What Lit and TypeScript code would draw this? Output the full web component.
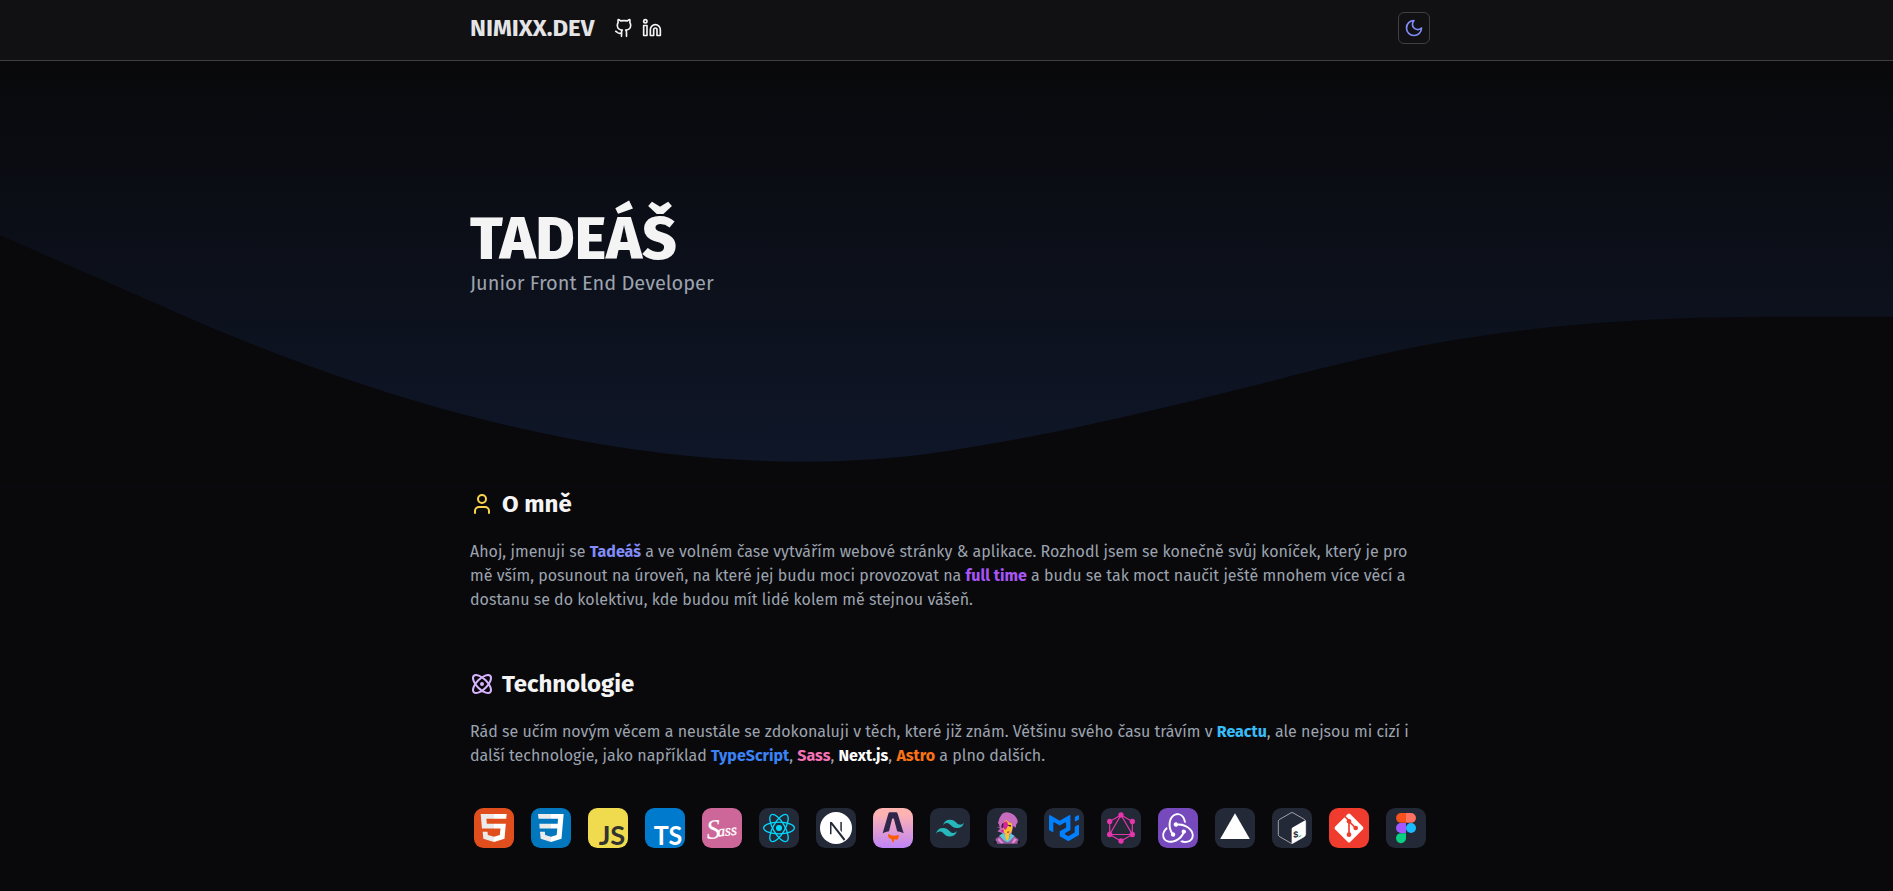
import { LitElement, html, css, svg } from "lit";
import { customElement } from "lit/decorators.js";

const DARK = "#242938";

type Tech = { name: string; bg: string; art: unknown };

const techs: Tech[] = [
  {
    name: "HTML", bg: "#e14e1d",
    art: svg`<path fill="#ebebeb" d="M20 18H60V32H37L38.500 47H60V61.500H24ZM26 71H40.500L41.500 81 60 86V102L28 92Z"/>
      <path fill="#fff" d="M60 18H98L96.500 32.500H60ZM60 47H95.500L91.500 92 60 102V86L77.500 81 79.500 61.500H60Z"/>`,
  },
  {
    name: "CSS", bg: "#0277bd",
    art: svg`<path fill="#ebebeb" d="M21 18H60V32.500H22.500ZM25 47H60V61.500H26ZM27 71H41.500L42.500 81 60 86V102L29 92Z"/>
      <path fill="#fff" d="M60 18H98L91.500 92 60 102V86L77 81 79 61.500H60V47H80L81 32.500H60Z"/>`,
  },
  {
    name: "JavaScript", bg: "#f0db4f",
    art: svg`<text class="mono" x="32" y="111" textLength="80" lengthAdjust="spacingAndGlyphs" fill="#323330">JS</text>`,
  },
  {
    name: "TypeScript", bg: "#007acc",
    art: svg`<text class="mono" x="26" y="111" textLength="86" lengthAdjust="spacingAndGlyphs" fill="#fff">TS</text>`,
  },
  {
    name: "Sass", bg: "#cd6799",
    art: svg`<g fill="#fff" stroke="#fff" transform="rotate(-5 60 60)"><text class="script" x="13" y="89" font-size="82" stroke-width="0.500">S</text><text class="script" x="45" y="84" font-size="46" textLength="59" lengthAdjust="spacingAndGlyphs" stroke-width="1">ass</text></g>`,
  },
  {
    name: "React", bg: DARK,
    art: svg`<circle cx="60" cy="60" r="9" fill="#00d8ff"/>
      <g fill="none" stroke="#00d8ff" stroke-width="4">
        <ellipse cx="60" cy="60" rx="46" ry="17.500"/>
        <ellipse cx="60" cy="60" rx="46" ry="17.500" transform="rotate(60 60 60)"/>
        <ellipse cx="60" cy="60" rx="46" ry="17.500" transform="rotate(120 60 60)"/>
      </g>`,
  },
  {
    name: "Next.js", bg: DARK,
    art: svg`<circle cx="60" cy="60" r="48" fill="#fff"/>
      <path fill="${DARK}" d="M42 42H47.500L88 94 83.500 98 46.500 50V79H42ZM73 42H77.500V73L73 67Z"/>`,
  },
  {
    name: "Astro", bg: "url(#astro)",
    art: svg`<defs><linearGradient id="astro" x1="0" y1="0" x2="0" y2="1"><stop offset="0.150" stop-color="#ffb3b1"/><stop offset="1" stop-color="#bf84f7"/></linearGradient></defs>
      <path fill="#302649" d="M29 76 46 17Q47 13 51 13H69Q73 13 74 17L92 76Q83 71 72.500 69.500L63 34Q60 28 57 34L48 69.500Q38 71 29 76Z"/>
      <path fill="#ff5d01" d="M45 78Q60 87 77 80Q79 93 68 96Q67 91 64 94Q61 99 62 105Q55 101 56 94Q44 91 45 78Z"/>`,
  },
  {
    name: "Tailwind CSS", bg: DARK,
    art: svg`<g transform="translate(18 35) scale(1.556)" fill="#26b8bb"><path d="M27 0c-7.200 0-11.700 3.600-13.500 10.800 2.700-3.600 5.850-4.950 9.450-4.050 2.054.513 3.522 2.004 5.147 3.653C30.744 13.090 33.808 16.200 40.500 16.200c7.200 0 11.700-3.600 13.500-10.800-2.700 3.600-5.850 4.950-9.450 4.050-2.054-.513-3.522-2.004-5.147-3.653C36.756 3.110 33.692 0 27 0zM13.500 16.200C6.300 16.200 1.800 19.800 0 27c2.700-3.600 5.850-4.950 9.450-4.050 2.054.514 3.522 2.004 5.147 3.653C17.244 29.290 20.308 32.400 27 32.400c7.200 0 11.700-3.600 13.500-10.800-2.700 3.600-5.850 4.950-9.450 4.050-2.054-.513-3.522-2.004-5.147-3.653C23.256 19.310 20.192 16.200 13.500 16.200z"/></g>`,
  },
  {
    name: "Styled Components", bg: DARK,
    art: svg`<path fill="#c66bbd" d="M45 18Q55 9 70 15Q84 20 90 33Q95 43 88 49L86 59 79 54 72 84H52L44 74 31 70 40 62 31 58 38 50 33 46Q36 28 45 18Z"/>
      <path fill="#fdc02f" d="M49 36 57 30 62 38 70 42 75 48V66Q72 77 66 78L68 92H52L55 78Q49 72 48 62Z"/>
      <path fill="#33203b" d="M42 48 50 44 52 58 44 60ZM34 54 40 50 40 58 32 58ZM63 50 73 52 71 56 64 54Z"/>
      <path fill="#d6249f" d="M50 42 60 40 64 52 56 66 48 60ZM40 68 50 64 50 74Z"/>
      <path fill="#c66bbd" d="M44 24Q58 20 64 30L78 44 70 46 58 36 46 46 40 62 36 50Z"/>
      <path fill="#a03b4a" d="M60 71 67 70 66 74 60 74Z"/>
      <path fill="#5cc8d8" d="M37 82 51 75 59 92 66 90 70 76 83 84 76 97 62 104 46 96Z"/>
      <path fill="#fdc02f" d="M54 80H67L63 98 57 95Z"/>
      <path fill="#9d5a9f" d="M26 92 38 84 54 100 62 105 82 85 94 94 96 107H24Z"/>
      <path fill="#e08bd2" d="M36 90 50 106H42L32 96ZM82 90 90 95 80 106H74Z"/>
      <path fill="#15151c" d="M23 98H27L31 107H22ZM93 98H97L98 107H91Z"/>`,
  },
  {
    name: "MUI", bg: DARK,
    art: svg`<g transform="translate(15 19.500) scale(2.500)" fill="#007fff"><path d="M30.343 21.976a1 1 0 00.502-.864l.018-5.787a1 1 0 01.502-.864l3.137-1.802a1 1 0 011.498.867v10.521a1 1 0 01-.502.867l-11.839 6.800a1 1 0 01-.994.001l-9.291-5.314a1 1 0 01-.504-.868v-5.305l.031-.030 7.652-4.396.003-5.224a1 1 0 00-1.500-.870l-5.687 3.277a1 1 0 01-.998 0L6.666 9.700a1 1 0 00-1.499.866v9.400a1 1 0 01-1.496.869l-3.166-1.810a1 1 0 01-.504-.870l.028-16.430A1 1 0 011.527.860l10.845 6.229a1 1 0 00.996 0L24.210.860a1 1 0 011.498.868v16.434a1 1 0 01-.501.867l-5.678 3.270a1 1 0 00.004 1.735l3.132 1.783a1 1 0 00.993-.002l6.685-3.839zM31 7.234a1 1 0 001.514.857l3-1.800A1 1 0 0036 5.434V1.766A1 1 0 0034.486.910l-3 1.800a1 1 0 00-.486.857v3.668z"/></g>`,
  },
  {
    name: "GraphQL", bg: DARK,
    art: svg`<g fill="none" stroke="#e535ab" stroke-width="3.600"><path d="M60 21 94 40.500V79.500L60 99 26 79.500V40.500ZM60 21 94 79.500H26Z"/></g>
      <g fill="#e535ab"><circle cx="60" cy="21" r="8"/><circle cx="94" cy="40.500" r="8"/><circle cx="94" cy="79.500" r="8"/><circle cx="60" cy="99" r="8"/><circle cx="26" cy="79.500" r="8"/><circle cx="26" cy="40.500" r="8"/></g>`,
  },
  {
    name: "Redux", bg: "#764abc",
    art: svg`<g transform="translate(13 13) scale(3.920)" fill="#fff"><path d="M16.633 16.504c.869-.075 1.543-.840 1.499-1.754-.046-.914-.795-1.648-1.708-1.648h-.061a1.710 1.710 0 00-1.648 1.769c.030.479.226.869.494 1.153-1.048 2.038-2.621 3.535-5.005 4.795-1.603.838-3.296 1.154-4.944.929-1.378-.194-2.456-.810-3.116-1.799-.988-1.499-1.078-3.116-.255-4.734.601-1.166 1.499-2.023 2.099-2.443a9.960 9.960 0 01-.420-1.542C-.867 14.408-.418 18.752.932 20.805c1.004 1.498 3.057 2.456 5.304 2.456.599 0 1.230-.044 1.843-.194 3.896-.749 6.847-3.086 8.540-6.532l.014-.031zM21.981 12.755c-2.321-2.727-5.738-4.225-9.634-4.225h-.510c-.253-.554-.837-.899-1.498-.899h-.045c-.943 0-1.678.810-1.647 1.753.030.898.794 1.648 1.708 1.648h.074a1.690 1.690 0 001.499-1.049h.555c2.309 0 4.495.674 6.488 1.992 1.527 1.004 2.622 2.322 3.236 3.896.538 1.288.509 2.547-.045 3.597-.855 1.647-2.294 2.517-4.196 2.517-1.199 0-2.367-.375-2.967-.644-.360.298-.960.793-1.394 1.093 1.318.598 2.652.943 3.940.943 2.922 0 5.093-1.647 5.918-3.236.898-1.798.824-4.824-1.470-7.416l-.012.030zM6.490 17.042c.030.899.793 1.648 1.708 1.648h.060a1.688 1.688 0 001.648-1.768c0-.900-.779-1.647-1.693-1.647h-.060c-.060 0-.149 0-.226.029-1.243-2.098-1.768-4.346-1.572-6.772.120-1.828.720-3.417 1.797-4.735.899-1.124 2.593-1.680 3.746-1.708 3.236-.061 4.585 3.971 4.689 5.574l1.498.450C17.741 3.197 14.686.620 11.764.620 9.020.620 6.490 2.613 5.470 5.535 4.077 9.430 4.991 13.177 6.700 16.174c-.149.195-.240.539-.210.868z"/></g>`,
  },
  { name: "Vercel", bg: DARK, art: svg`<path fill="#fff" d="M60 16 104.500 93H15.500Z"/>` },
  {
    name: "Bash", bg: DARK,
    art: svg`<path fill="none" stroke="#fff" stroke-width="1.700" stroke-linejoin="round" d="M56 15Q60 12 64 15L97 34Q101 36 101 41V79Q101 83 97 86L64 105Q60 108 56 105L23 86Q19 83 19 79V41Q19 36 23 34Z"/>
      <path fill="#fff" d="M59 64Q59 60 63 58L97 38Q101 36 101 41V79Q101 83 97 86L63 106Q59 108 59 104Z"/>
      <text class="prompt" x="64" y="88" fill="${DARK}" transform="skewY(-6) translate(0 8)">$</text>
      <path stroke="#47b353" stroke-width="3" d="M80 87 88 82"/>`,
  },
  {
    name: "Git", bg: "#f03c2e",
    art: svg`<rect x="28" y="28" width="64" height="64" rx="5" fill="#fff" transform="rotate(45 60 60)"/>
      <g stroke="#f03c2e" stroke-width="5" fill="none"><path d="M43 21 60 38V80M60 40 80 60"/></g>
      <g fill="#f03c2e"><circle cx="60" cy="40" r="7"/><circle cx="80" cy="60" r="7"/><circle cx="60" cy="80" r="7"/></g>`,
  },
  {
    name: "Figma", bg: DARK,
    art: svg`<path fill="#f4511e" d="M45 15H60V44.500H45A14.750 14.750 0 0 1 45 15Z"/>
      <path fill="#ff7262" d="M60 15H75A14.750 14.750 0 0 1 75 44.500H60Z"/>
      <path fill="#a259ff" d="M45 45H60V75H45A15 15 0 0 1 45 45Z"/>
      <circle cx="75" cy="60" r="15" fill="#1abcfe"/>
      <path fill="#0acf83" d="M45 75.500H60V91A15 15 0 1 1 45 75.500Z"/>`,
  },
];

@customElement("app-root")
export class AppRoot extends LitElement {
  static styles = css`
    :host {
      display: block;
      height: 891px;
      overflow: hidden;
      background: #09090b;
      color: #9ca3af;
      font: 400 16px/24px "Fira Sans", "Noto Sans", sans-serif;
    }
    .wrap { width: 960px; margin-left: calc(50% - 476.5px); }
    header { height: 60px; background: #111113; border-bottom: 1px solid #3f3f42; }
    .bar { display: flex; align-items: center; padding-top: 12px; height: 32px; }
    .logo { font-size: 24px; line-height: 32px; font-weight: 700; color: #e4e4e7; margin-right: 19.6px; }
    .links { display: flex; gap: 8px; color: #f4f4f5; }
    svg { display: block; }
    .line { fill: none; stroke: currentColor; stroke-width: 2; stroke-linecap: round; stroke-linejoin: round; }
    .toggle {
      box-sizing: border-box; margin-left: auto; width: 32px; height: 32px; padding: 0;
      display: grid; place-items: center; border: 1px solid #3f3f46; border-radius: 6px;
      background: #111113; color: #818cf8;
    }
    .hero { display: grid; height: 426px; background: linear-gradient(#09090b, #0f172a); }
    .hero > * { grid-area: 1 / 1; }
    .wave { width: 100%; height: auto; align-self: end; }
    .intro { z-index: 1; padding-top: 148px; }
    h1 { margin: 0; font-size: 60px; line-height: 60px; font-weight: 800; color: #f4f4f5; }
    .role { margin: 0; font-size: 20px; line-height: 28px; }
    main { padding-top: 1px; }
    section + section { margin-top: 56px; }
    h2 { display: flex; align-items: center; gap: 8px; margin: 0 0 20px; font-size: 24px; line-height: 32px; font-weight: 700; color: #f4f4f5; }
    p { margin: 0; }
    b { font-weight: 700; }
    .yellow { color: #fcd34d; }
    .lilac { color: #d8b4fe; }
    .indigo { color: #818cf8; }
    .purple { color: #a855f7; }
    .sky { color: #38bdf8; }
    .blue { color: #3b82f6; }
    .pink { color: #f472b6; }
    .white { color: #fff; }
    .orange { color: #f97316; }
    .techs { display: flex; justify-content: space-between; margin-top: 36px; }
    .tech { padding: 4px; }
    .mono { font-family: Lato, sans-serif; font-weight: 700; font-size: 79px; }
    .script { font-family: "Z003", "Liberation Serif", serif; font-style: italic; }
    .prompt { font: 700 27px "Liberation Sans", sans-serif; }
  `;

  render() {
    return html`
      <header>
        <div class="wrap bar">
          <span class="logo">NIMIXX.DEV</span>
          <div class="links">
            <svg class="line" width="20" height="20" viewBox="0 0 24 24"><path d="M15 22v-4a4.800 4.800 0 0 0-1-3.500c3 0 6-2 6-5.500.080-1.250-.270-2.480-1-3.500.280-1.150.280-2.350 0-3.500 0 0-1 0-3 1.500-2.640-.500-5.360-.500-8 0C6 2 5 2 5 2c-.300 1.150-.300 2.350 0 3.500A5.403 5.403 0 0 0 4 9c0 3.500 3 5.500 6 5.500-.390.490-.680 1.050-.850 1.650-.170.600-.220 1.230-.150 1.850v4"/><path d="M9 18c-4.510 2-5-2-7-2"/></svg>
            <svg class="line" width="20" height="20" viewBox="0 0 24 24"><path d="M16 8a6 6 0 0 1 6 6v7h-4v-7a2 2 0 0 0-4 0v7h-4v-7a6 6 0 0 1 6-6z"/><rect x="2" y="9" width="4" height="12"/><circle cx="4" cy="4" r="2"/></svg>
          </div>
          <button class="toggle" aria-label="Motiv">
            <svg class="line" width="20" height="20" viewBox="0 0 24 24"><path d="M12 3a6 6 0 0 0 9 9 9 9 0 1 1-9-9Z"/></svg>
          </button>
        </div>
      </header>
      <div class="hero">
        <svg class="wave" viewBox="0 0 1440 320"><path fill="#09090b" d="M0 128.800 120 181.300C240 235 480 329 720 293C796.700 281.500 873.300 263.400 950 244C1001.700 230.900 1053.300 217.500 1105 208.700C1178.700 196.600 1252.300 191.400 1340 190.800L1440 190.800V320H0Z"/></svg>
        <div class="wrap intro">
          <h1>TADEÁŠ</h1>
          <p class="role">Junior Front End Developer</p>
        </div>
      </div>
      <main class="wrap">
        <section>
          <h2>
            <svg class="line yellow" width="24" height="24" viewBox="0 0 24 24"><path d="M19 21v-2a4 4 0 0 0-4-4H9a4 4 0 0 0-4 4v2"/><circle cx="12" cy="7" r="4"/></svg>
            O mně
          </h2>
          <p>Ahoj, jmenuji se <b class="indigo">Tadeáš</b> a ve volném čase vytvářím webové stránky &amp; aplikace. Rozhodl jsem se konečně svůj koníček, který je pro mě vším, posunout na úroveň, na které jej budu moci provozovat na <b class="purple">full time</b> a budu se tak moct naučit ještě mnohem více věcí a dostanu se do kolektivu, kde budou mít lidé kolem mě stejnou vášeň.</p>
        </section>
        <section>
          <h2>
            <svg class="line lilac" width="24" height="24" viewBox="0 0 24 24"><circle cx="12" cy="12" r="1"/><path d="M20.200 20.200c2.040-2.030.020-7.360-4.500-11.900-4.540-4.520-9.870-6.540-11.900-4.500-2.040 2.030-.020 7.360 4.500 11.900 4.540 4.520 9.870 6.540 11.900 4.500Z"/><path d="M15.700 15.700c4.520-4.540 6.540-9.870 4.500-11.900-2.030-2.040-7.360-.020-11.900 4.500-4.520 4.540-6.540 9.870-4.500 11.900 2.030 2.040 7.360.020 11.900-4.500Z"/></svg>
            Technologie
          </h2>
          <p>Rád se učím novým věcem a neustále se zdokonaluji v těch, které již znám. Většinu svého času trávím v <b class="sky">Reactu</b>, ale nejsou mi cizí i další technologie, jako například <b class="blue">TypeScript</b>, <b class="pink">Sass</b>, <b class="white">Next.js</b>, <b class="orange">Astro</b> a plno dalších.</p>
          <div class="techs">
            ${techs.map((t) => html`<div class="tech"><svg width="40" height="40" viewBox="0 0 120 120" aria-label=${t.name}><rect width="120" height="120" rx="28" fill=${t.bg}/>${t.art}</svg></div>`)}
          </div>
        </section>
      </main>
    `;
  }
}
